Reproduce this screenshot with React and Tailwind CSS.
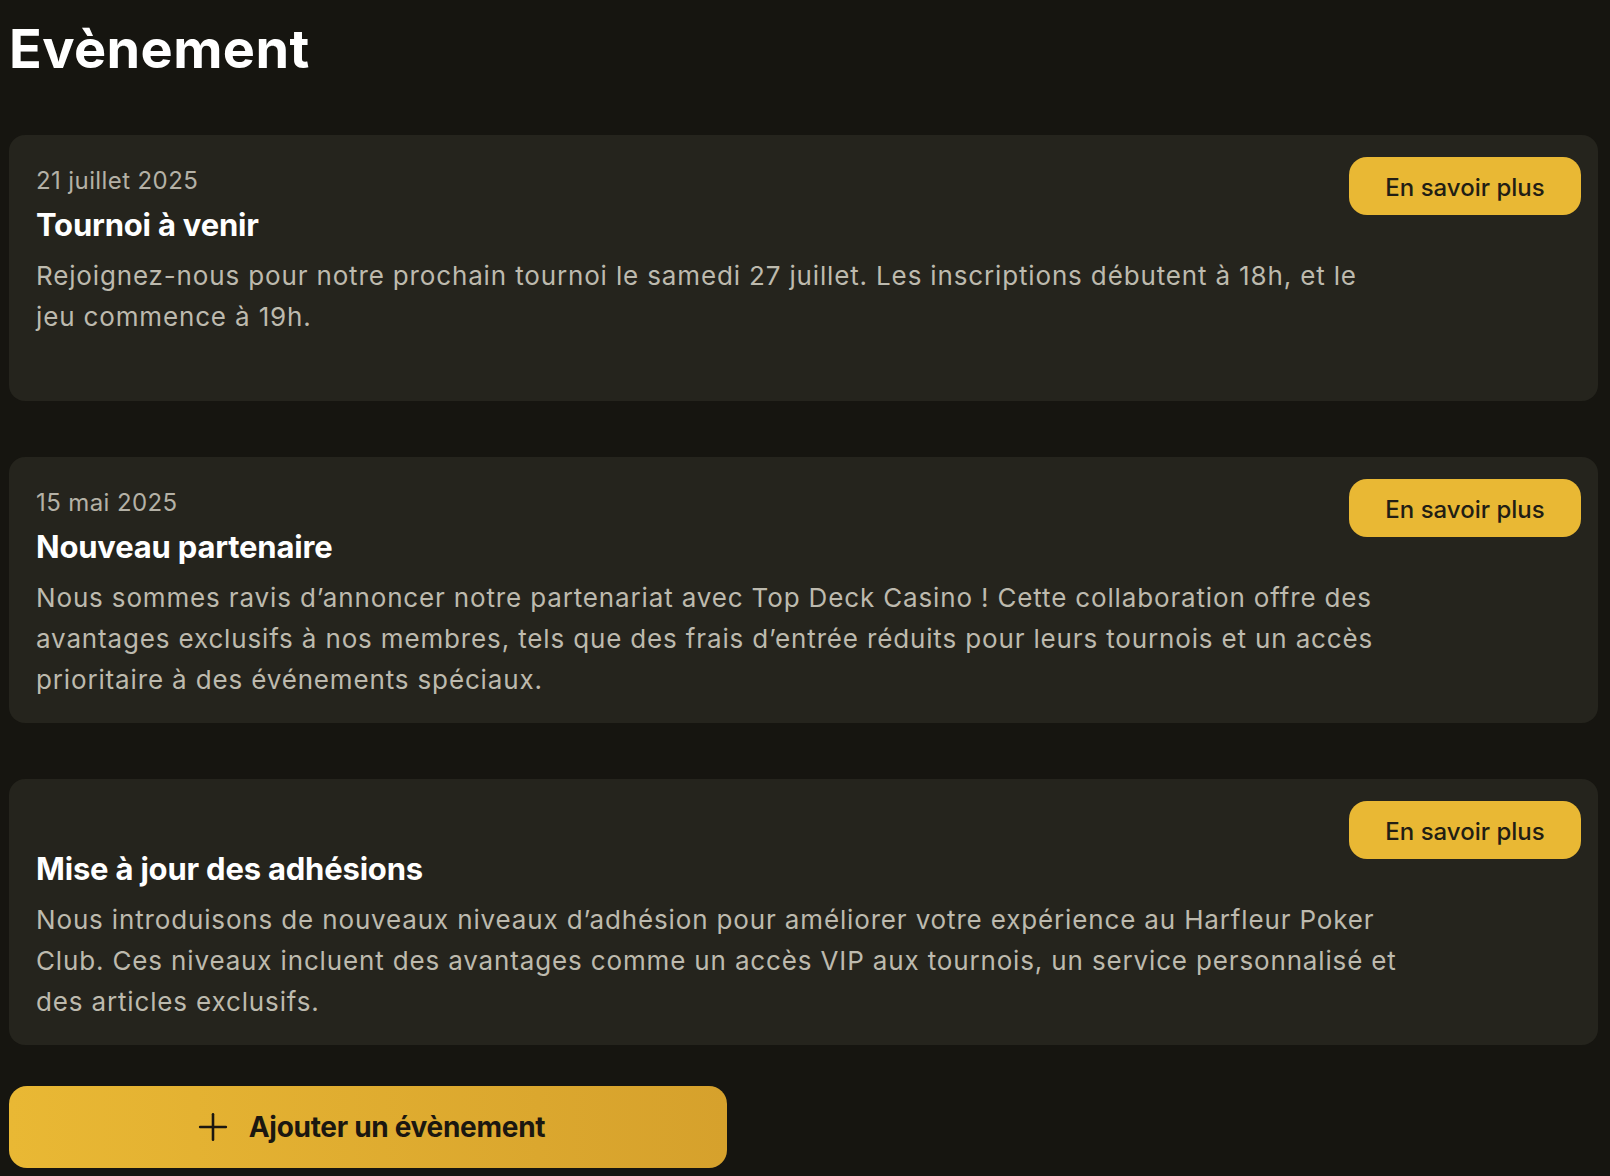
import { Plus } from "lucide-react";

const events = [
  {
    date: "21 juillet 2025",
    title: "Tournoi à venir",
    body: "Rejoignez-nous pour notre prochain tournoi le samedi 27 juillet. Les inscriptions débutent à 18h, et le jeu commence à 19h.",
  },
  {
    date: "15 mai 2025",
    title: "Nouveau partenaire",
    body: "Nous sommes ravis d’annoncer notre partenariat avec Top Deck Casino ! Cette collaboration offre des avantages exclusifs à nos membres, tels que des frais d’entrée réduits pour leurs tournois et un accès prioritaire à des événements spéciaux.",
  },
  {
    date: "",
    title: "Mise à jour des adhésions",
    body: "Nous introduisons de nouveaux niveaux d’adhésion pour améliorer votre expérience au Harfleur Poker Club. Ces niveaux incluent des avantages comme un accès VIP aux tournois, un service personnalisé et des articles exclusifs.",
  },
];

const EventCard = ({ event }) => (
  <div className="relative h-[266px] rounded-[16px] bg-[#25241d] pl-[27px] pr-[27px] pt-[28px]">
    <p className="h-[36px] text-[24px] leading-[36px] tracking-[0.4px] text-[#b4b1a6]">
      {event.date}
    </p>
    <h2 className="mt-[6px] text-[31px] font-bold leading-[40px] tracking-[-0.2px] text-white">
      {event.title}
    </h2>
    <p className="mt-[10px] w-[1362px] text-[26px] leading-[41px] tracking-[0.85px] text-[#bdbaae]">
      {event.body}
    </p>
    <button className="absolute right-[17px] top-[22px] h-[58px] w-[232px] rounded-[18px] bg-[#e9b834] pt-[3px] text-[24px] font-medium text-[#221e14]">
      En savoir plus
    </button>
  </div>
);

export default function App() {
  return (
    <div
      className="min-h-screen bg-[#161510] pb-[8px] pl-[9px] pr-[12px] pt-[22px]"
      style={{ fontFamily: "Inter, 'Noto Sans', sans-serif" }}
    >
      <h1 className="text-[54px] font-bold leading-[54px] tracking-[0.4px] text-white">
        Evènement
      </h1>

      <div className="mt-[59px] flex flex-col gap-[56px]">
        {events.map((event) => (
          <EventCard key={event.title} event={event} />
        ))}
      </div>

      <button className="mt-[41px] flex h-[82px] w-[718px] items-center justify-center gap-[14px] rounded-[18px] bg-gradient-to-r from-[#e9b834] to-[#d6a12c] text-[#1b1710]">
        <Plus size={44} strokeWidth={1.4} />
        <span className="text-[28px] font-bold tracking-[-0.3px]">
          Ajouter un évènement
        </span>
      </button>
    </div>
  );
}
